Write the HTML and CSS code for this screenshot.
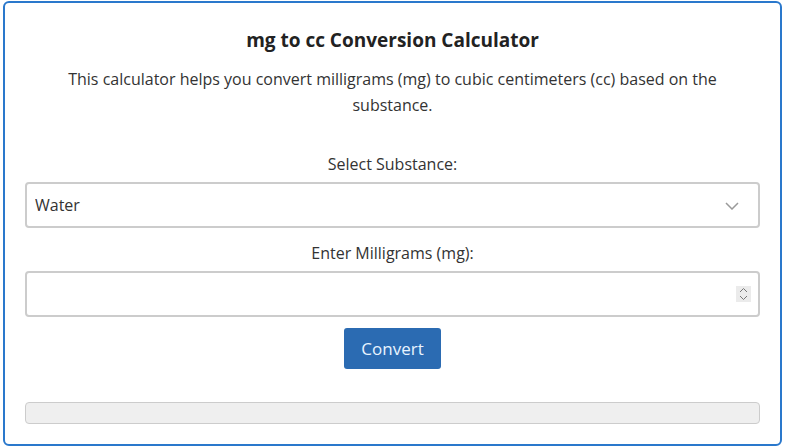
FILE: index.html
```html
<!DOCTYPE html>
<html lang="en">
<head>
  <meta charset="UTF-8">
  <title>mg to cc Conversion Calculator</title>
  <link rel="stylesheet" href="styles.css">
</head>
<body>

  <div class="calc-container">
    <h2>mg to cc Conversion Calculator</h2>
    <p class="intro">This calculator helps you convert milligrams (mg) to cubic centimeters (cc) based on the substance.</p>

    <label for="substance">Select Substance:</label>
    <div class="field">
      <select id="substance" name="substance">
        <option value="1">Water</option>
        <option value="0.92">Oil</option>
        <option value="1.03">Milk</option>
      </select>
      <svg class="chevron" width="14" height="8" viewBox="0 0 14 8">
        <path d="M1 1l6 6 6-6" fill="none" stroke="#9a9a9a" stroke-width="1.5"/>
      </svg>
    </div>

    <label for="mg">Enter Milligrams (mg):</label>
    <div class="field">
      <input type="number" id="mg" name="mg">
      <span class="spinner">
        <svg width="9" height="14" viewBox="0 0 9 14">
          <path d="M1 5l3.5-3.5L8 5M1 9l3.5 3.5L8 9" fill="none" stroke="#777" stroke-width="1"/>
        </svg>
      </span>
    </div>

    <button type="button" id="convertBtn">Convert</button>

    <div class="result" id="result"></div>
  </div>

<script>
document.getElementById("convertBtn").addEventListener("click", function() {
  const density = parseFloat(document.getElementById("substance").value);
  const mg = parseFloat(document.getElementById("mg").value);
  const result = document.getElementById("result");
  if (isNaN(mg)) {
    result.textContent = "Please enter a valid number.";
    return;
  }
  const cc = mg / 1000 / density;
  result.textContent = mg + " mg = " + cc.toFixed(4) + " cc";
});
</script>

</body>
</html>
```

FILE: styles.css
```css
body {
  font-family: "Open Sans", Arial, sans-serif;
  background: #fff;
  margin: 0;
  padding: 1px 3px;
}

.calc-container {
  border: 2px solid #2a78cc;
  border-radius: 6px;
  padding: 20px 20px 20px;
  height: 445px;
  box-sizing: border-box;
  display: flex;
  flex-direction: column;
  align-items: center;
  color: #333;
}

h2 {
  font-size: 19px;
  color: #222;
  margin: 4px 0 13px;
}

.intro {
  font-size: 16px;
  line-height: 26px;
  text-align: center;
  margin: 0 0 21px;
  padding: 0 30px;
}

label {
  font-size: 16px;
  line-height: 22px;
  margin: 14px 0 7px;
}

.field {
  position: relative;
  width: 100%;
}

select, input {
  width: 100%;
  height: 46px;
  box-sizing: border-box;
  padding: 0 8px;
  border: 2px solid #ccc;
  border-radius: 4px;
  font-family: inherit;
  font-size: 16px;
  color: #333;
  background: #fff;
  appearance: none;
  -webkit-appearance: none;
}

input::-webkit-inner-spin-button,
input::-webkit-outer-spin-button {
  -webkit-appearance: none;
  margin: 0;
}

.chevron {
  position: absolute;
  right: 21px;
  top: 20px;
}

.spinner {
  position: absolute;
  right: 9px;
  top: 15px;
  width: 15px;
  height: 16px;
  background: #ebebeb;
  display: flex;
  align-items: center;
  justify-content: center;
}

button {
  margin-top: 11px;
  background-color: #2b6bb2;
  color: #e8f4ff;
  border: none;
  border-radius: 3px;
  padding: 0 17px;
  height: 42px;
  font-family: inherit;
  font-size: 17px;
  cursor: pointer;
}

button:hover {
  background-color: #245a96;
}

.result {
  margin-top: 33px;
  width: 100%;
  height: 22px;
  box-sizing: border-box;
  background: #efefef;
  border: 1px solid #ccc;
  border-radius: 4px;
  font-size: 14px;
  padding: 0 10px;
}
```
